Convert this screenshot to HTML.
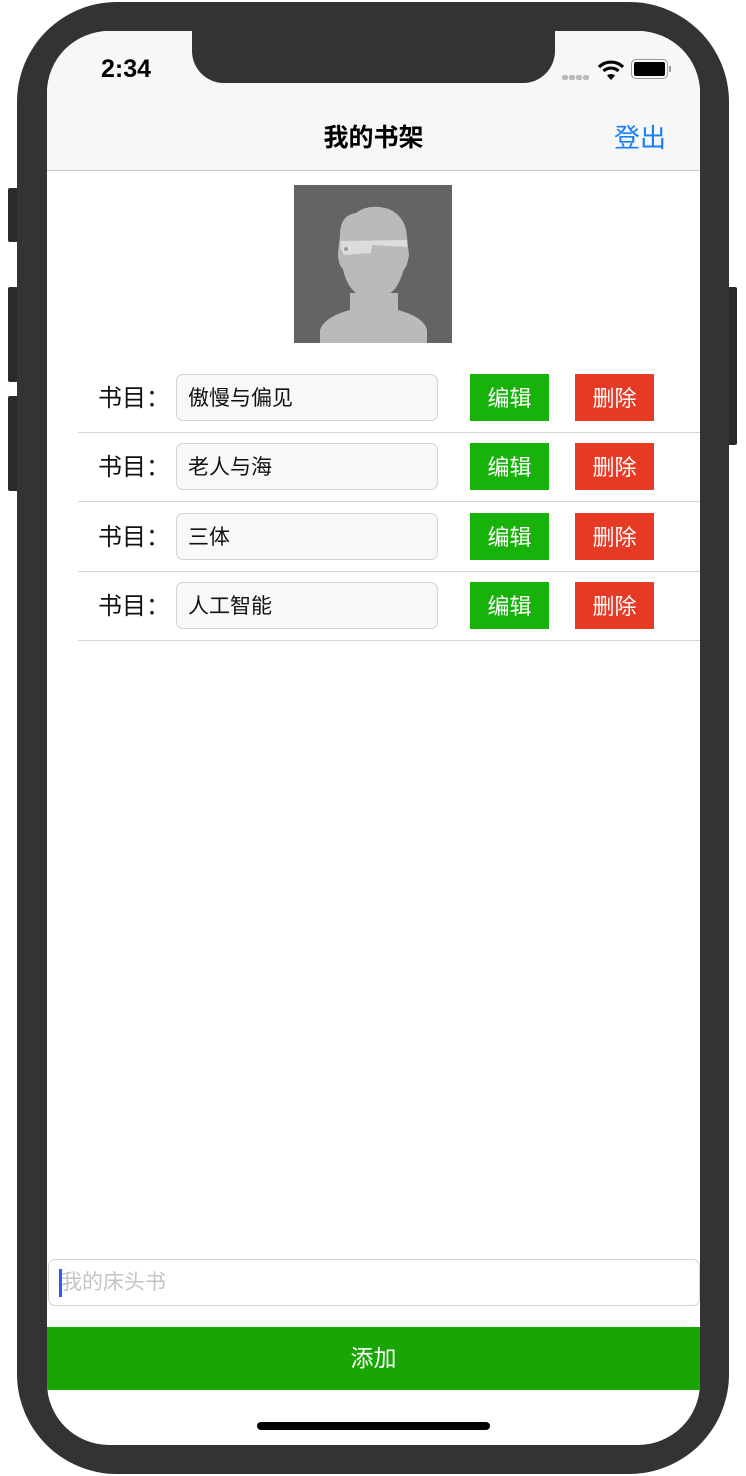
<!DOCTYPE html>
<html><head><meta charset="utf-8"><style>
*{margin:0;padding:0;box-sizing:border-box}
body{width:746px;height:1476px;background:#fff;position:relative;overflow:hidden;font-family:"Liberation Sans","Noto Sans CJK SC",sans-serif}
.phone{position:absolute;left:17px;top:2px;width:712px;height:1472px;background:#333;border-radius:100px}
.btn{position:absolute;background:#2a2a2a;border-radius:2px}
.screen{position:absolute;left:47px;top:31px;width:653px;height:1414px;background:#fff;border-radius:62px;overflow:hidden}
.nav{position:absolute;left:0;top:0;width:653px;height:140px;background:#f7f7f7;border-bottom:1px solid #c8c8c8}
.notch{position:absolute;left:145px;top:0;width:363px;height:52px;background:#333;border-radius:0 0 32px 32px}
.time{position:absolute;left:54px;top:24px;font-size:25px;font-weight:bold;color:#000}
.title{position:absolute;left:0;width:653px;top:87px;text-align:center;font-size:25px;font-weight:bold}
.logout{position:absolute;left:567px;top:87px;font-size:26px;color:#157efb}
.row{position:absolute;left:31px;width:622px;height:69px;border-bottom:1px solid #d6d6d6}
.lbl{position:absolute;left:20px;top:14px;font-size:24px;color:#111}
.inp{position:absolute;left:98px;top:10px;width:262px;height:47px;background:#f8f8f8;border:1px solid #d4d4d4;border-radius:7px;font-size:21px;line-height:47px;padding-left:11px;color:#111}
.e,.d{position:absolute;top:10px;width:79px;height:47px;color:#fff;font-size:22px;text-align:center;line-height:49px}
.e{left:392px;background:#17b30b}.d{left:497px;background:#e63a24}
</style></head><body>
<div class="btn" style="left:8px;top:188px;width:10px;height:54px"></div>
<div class="btn" style="left:8px;top:287px;width:10px;height:95px"></div>
<div class="btn" style="left:8px;top:396px;width:10px;height:95px"></div>
<div class="btn" style="left:728px;top:287px;width:9px;height:158px"></div>
<div class="phone"></div>
<div class="screen">
 <div class="nav"></div>
 <div class="notch"></div>
 <div class="time">2:34</div>
 <div style="position:absolute;left:515px;top:44px">
  <span style="position:absolute;left:0;top:0;width:6px;height:5px;background:#bbb;border-radius:2px"></span>
  <span style="position:absolute;left:7px;top:0;width:6px;height:5px;background:#bbb;border-radius:2px"></span>
  <span style="position:absolute;left:14px;top:0;width:6px;height:5px;background:#bbb;border-radius:2px"></span>
  <span style="position:absolute;left:21px;top:0;width:6px;height:5px;background:#bbb;border-radius:2px"></span>
 </div>
 <svg style="position:absolute;left:550px;top:28px" width="28" height="22" viewBox="0 0 28 22"><path d="M2 8 A17 17 0 0 1 26 8" stroke="#000" stroke-width="3.2" fill="none"/><path d="M6.5 12 A11 11 0 0 1 21.5 12" stroke="#000" stroke-width="3.2" fill="none"/><path d="M10 16.5 L14 21 L18 16.5 A6 6 0 0 0 10 16.5Z" fill="#000"/></svg>
 <div style="position:absolute;left:584px;top:28px;width:37px;height:20px;border:1.5px solid #999;border-radius:5px;padding:2px"><div style="width:100%;height:100%;background:#000;border-radius:2px"></div></div>
 <div style="position:absolute;left:622px;top:35px;width:2px;height:6px;background:#999"></div>
 <div class="title">我的书架</div>
 <div class="logout">登出</div>
 <svg style="position:absolute;left:247px;top:154px" width="158" height="158" viewBox="0 0 158 158">
  <rect width="158" height="158" fill="#646464"/>
  <path d="M26 158 L26 145 Q30 132 56 125 L56 108 L104 108 L104 125 Q130 132 133 145 L133 158Z" fill="#bababa"/>
  <path d="M46 50 Q46 30 62 28 Q75 18 95 24 Q112 32 113 52 L115 70 Q113 82 110 84 Q104 104 96 108 L62 108 Q52 100 49 84 Q44 80 44 68Z" fill="#bababa"/>
  <path d="M46 56 L113 55 L113 62 L78 60 L77 68 L50 70 L47 64Z" fill="#dcdcdc"/>
  <circle cx="52" cy="64" r="2" fill="#999"/>
 </svg>
 <div class="row" style="top:333px"><span class="lbl">书目：</span><div class="inp">傲慢与偏见</div><div class="e">编辑</div><div class="d">删除</div></div>
 <div class="row" style="top:402px"><span class="lbl">书目：</span><div class="inp">老人与海</div><div class="e">编辑</div><div class="d">删除</div></div>
 <div class="row" style="top:472px"><span class="lbl">书目：</span><div class="inp">三体</div><div class="e">编辑</div><div class="d">删除</div></div>
 <div class="row" style="top:541px"><span class="lbl">书目：</span><div class="inp">人工智能</div><div class="e">编辑</div><div class="d">删除</div></div>
 <div style="position:absolute;left:1px;top:1228px;width:652px;height:47px;border:1px solid #d4d4d4;border-radius:7px;font-size:21px;line-height:45px;padding-left:12px;color:#c4c4c4">我的床头书<span style="position:absolute;left:10px;top:9px;width:3px;height:28px;background:#2a5cf4"></span></div>
 <div style="position:absolute;left:0;top:1296px;width:653px;height:63px;background:#17a604;color:#fff;font-size:23px;text-align:center;line-height:63px">添加</div>
 <div style="position:absolute;left:210px;top:1391px;width:233px;height:8px;background:#000;border-radius:4px"></div>
</div>
</body></html>
